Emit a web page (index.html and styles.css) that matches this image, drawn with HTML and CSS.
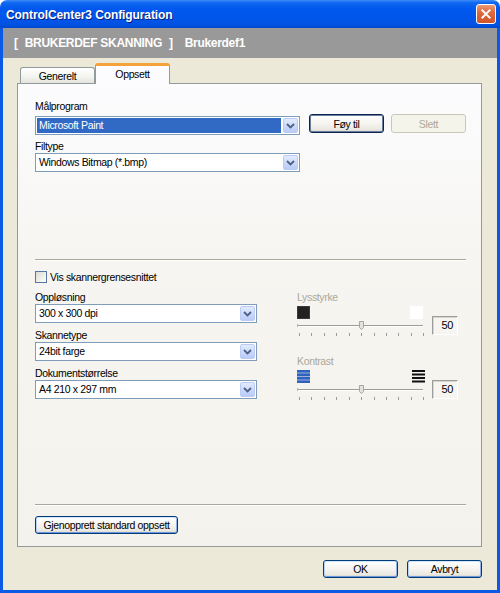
FILE: index.html
```html
<!DOCTYPE html>
<html>
<head>
<meta charset="utf-8">
<link rel="stylesheet" href="styles.css">
</head>
<body>
<div class="window">
  <div class="titlebar">
    <span class="title">ControlCenter3 Configuration</span>
    <span class="close"><svg width="20" height="20" viewBox="0 0 20 20"><path d="M6 6 L14 14 M14 6 L6 14" stroke="#fff" stroke-width="2.2" stroke-linecap="square"/></svg></span>
  </div>
  <div class="frame">
    <div class="header">
      <span class="br">[</span><span class="hd-main">BRUKERDEF SKANNING</span><span class="br br2">]</span><span class="hd-name">Brukerdef1</span>
    </div>
    <div class="tabs">
      <div class="tab">Generelt</div>
      <div class="tab active">Oppsett</div>
    </div>
    <div class="panel">
      <div class="label">Målprogram</div>
      <div class="row-app">
        <div class="select wide focus"><span class="val">Microsoft Paint</span><span class="dd"><svg width="13" height="13" viewBox="0 0 13 13"><path d="M3 5 L6.5 8.5 L10 5" fill="none" stroke="#4D6185" stroke-width="1.8"/></svg></span></div>
        <button class="btn def">Føy til</button>
        <button class="btn disabled">Slett</button>
      </div>
      <div class="label mt5">Filtype</div>
      <div class="select wide"><span class="val">Windows Bitmap (*.bmp)</span><span class="dd"><svg width="13" height="13" viewBox="0 0 13 13"><path d="M3 5 L6.5 8.5 L10 5" fill="none" stroke="#4D6185" stroke-width="1.8"/></svg></span></div>

      <div class="sep sep1"></div>

      <div class="check-row"><span class="checkbox"></span><span>Vis skannergrensesnittet</span></div>

      <div class="cols">
        <div class="col-left">
          <div class="label">Oppløsning</div>
          <div class="select narrow"><span class="val">300 x 300 dpi</span><span class="dd"><svg width="13" height="13" viewBox="0 0 13 13"><path d="M3 5 L6.5 8.5 L10 5" fill="none" stroke="#4D6185" stroke-width="1.8"/></svg></span></div>
          <div class="label">Skannetype</div>
          <div class="select narrow"><span class="val">24bit farge</span><span class="dd"><svg width="13" height="13" viewBox="0 0 13 13"><path d="M3 5 L6.5 8.5 L10 5" fill="none" stroke="#4D6185" stroke-width="1.8"/></svg></span></div>
          <div class="label">Dokumentstørrelse</div>
          <div class="select narrow"><span class="val">A4 210 x 297 mm</span><span class="dd"><svg width="13" height="13" viewBox="0 0 13 13"><path d="M3 5 L6.5 8.5 L10 5" fill="none" stroke="#4D6185" stroke-width="1.8"/></svg></span></div>
        </div>
        <div class="col-right">
          <div class="group">
            <div class="label dis">Lysstyrke</div>
            <div class="slider-row">
              <div class="slider-block">
                <div class="icons">
                  <span class="sq-black"></span>
                  <span class="sq-white"></span>
                </div>
                <svg class="slider" width="128" height="19" viewBox="0 0 128 19">
                  <rect x="0" y="6" width="126" height="1" fill="#9D9C99"/>
                  <rect x="0" y="7" width="126" height="1" fill="#FFFFFF"/>
                  <rect x="0" y="5" width="1" height="3" fill="#B8B6AE"/>
                  <path d="M62.5 2.5 H66.5 V8.5 L64.5 10.5 L62.5 8.5 Z" fill="#E4E2DA" stroke="#A8A69E" stroke-width="1"/>
                  <g fill="#9A9A9A">
                    <rect x="2" y="14" width="1" height="3"/><rect x="14" y="14" width="1" height="3"/><rect x="27" y="14" width="1" height="3"/><rect x="39" y="14" width="1" height="3"/><rect x="52" y="14" width="1" height="3"/><rect x="64" y="14" width="1" height="3"/><rect x="77" y="14" width="1" height="3"/><rect x="89" y="14" width="1" height="3"/><rect x="101" y="14" width="1" height="3"/><rect x="114" y="14" width="1" height="3"/><rect x="126" y="14" width="1" height="3"/>
                  </g>
                </svg>
              </div>
              <div class="numbox">50</div>
            </div>
          </div>
          <div class="group">
            <div class="label dis">Kontrast</div>
            <div class="slider-row">
              <div class="slider-block">
                <div class="icons">
                  <svg width="13" height="13" viewBox="0 0 13 13">
                    <rect x="0" y="0" width="13" height="13" fill="#9DB0D6"/>
                    <rect x="0" y="0" width="13" height="2.5" fill="#2F62BE"/>
                    <rect x="0" y="3.5" width="13" height="2.5" fill="#2F62BE"/>
                    <rect x="0" y="7" width="13" height="2.5" fill="#2F62BE"/>
                    <rect x="0" y="10.5" width="13" height="2.5" fill="#2F62BE"/>
                  </svg>
                  <svg width="13" height="13" viewBox="0 0 13 13">
                    <rect x="0" y="0" width="13" height="13" fill="#F2F1EC"/>
                    <rect x="0" y="0" width="13" height="2" fill="#111"/>
                    <rect x="0" y="3.5" width="13" height="2" fill="#111"/>
                    <rect x="0" y="7" width="13" height="2" fill="#111"/>
                    <rect x="0" y="10.5" width="13" height="2" fill="#111"/>
                  </svg>
                </div>
                <svg class="slider" width="128" height="19" viewBox="0 0 128 19">
                  <rect x="0" y="6" width="126" height="1" fill="#9D9C99"/>
                  <rect x="0" y="7" width="126" height="1" fill="#FFFFFF"/>
                  <rect x="0" y="5" width="1" height="3" fill="#B8B6AE"/>
                  <path d="M62.5 2.5 H66.5 V8.5 L64.5 10.5 L62.5 8.5 Z" fill="#E4E2DA" stroke="#A8A69E" stroke-width="1"/>
                  <g fill="#9A9A9A">
                    <rect x="2" y="14" width="1" height="3"/><rect x="14" y="14" width="1" height="3"/><rect x="27" y="14" width="1" height="3"/><rect x="39" y="14" width="1" height="3"/><rect x="52" y="14" width="1" height="3"/><rect x="64" y="14" width="1" height="3"/><rect x="77" y="14" width="1" height="3"/><rect x="89" y="14" width="1" height="3"/><rect x="101" y="14" width="1" height="3"/><rect x="114" y="14" width="1" height="3"/><rect x="126" y="14" width="1" height="3"/>
                  </g>
                </svg>
              </div>
              <div class="numbox">50</div>
            </div>
          </div>
        </div>
      </div>

      <div class="sep sep2"></div>
      <div class="restore-row"><button class="btn focus restore">Gjenopprett standard oppsett</button></div>
    </div>
    <div class="footer">
      <button class="btn focus">OK</button>
      <button class="btn focus">Avbryt</button>
    </div>
  </div>
</div>
</body>
</html>
```

FILE: styles.css
```css
html, body {
  margin: 0;
  padding: 0;
  background: #ffffff;
}

.window {
  width: 500px;
  height: 593px;
  display: flex;
  flex-direction: column;
  font-family: "Liberation Sans", Arial, sans-serif;
  font-size: 10.5px;
  letter-spacing: -0.35px;
  color: #000;
}

.titlebar {
  flex: none;
  height: 28px;
  box-sizing: border-box;
  border-radius: 7px 7px 0 0;
  background: linear-gradient(to bottom, #3B8CF8 0%, #1068F0 10%, #0058EE 30%, #0055E9 70%, #0252E0 90%, #0046C8 100%);
  display: flex;
  align-items: center;
  justify-content: space-between;
  padding: 1px 4px 0 6px;
}

.title {
  font-weight: bold;
  font-size: 12px;
  letter-spacing: -0.1px;
  color: #fff;
  text-shadow: 1px 1px 0 #0A1E7A;
}

.close {
  width: 20px;
  height: 20px;
  box-sizing: border-box;
  border: 1px solid #fff;
  border-radius: 3px;
  background: linear-gradient(to bottom, #EE9A74 0%, #E0683D 40%, #D0542A 100%);
  display: flex;
  align-items: center;
  justify-content: center;
  margin-top: -1px;
}

.close svg {
  width: 18px;
  height: 18px;
}

.frame {
  flex: 1;
  display: flex;
  flex-direction: column;
  background: #ECE9D8;
  border: 3px solid #0A5AE6;
  border-top: none;
}

.header {
  flex: none;
  height: 30px;
  background: #999999;
  color: #fff;
  font-weight: bold;
  font-size: 12px;
  letter-spacing: -0.3px;
  display: flex;
  align-items: center;
  padding-left: 11px;
}

.hd-main {
  margin-left: 7px;
}

.br2 {
  margin-left: 7px;
}

.hd-name {
  margin-left: 12px;
}

.tabs {
  flex: none;
  height: 19px;
  margin-top: 6px;
  padding-left: 17px;
  display: flex;
  align-items: flex-end;
  position: relative;
  z-index: 2;
}

.tab {
  width: 75px;
  height: 16px;
  box-sizing: border-box;
  border: 1px solid #919B9C;
  border-bottom: none;
  border-radius: 3px 3px 0 0;
  background: linear-gradient(to bottom, #FFFFFF, #F3F3EF 60%, #E4E3DC);
  display: flex;
  align-items: center;
  justify-content: center;
  padding-top: 1px;
}

.tab.active {
  width: 75px;
  height: 21px;
  margin-bottom: -1px;
  background: #FCFCFE;
  border-top: 3px solid #F3A33A;
  padding-top: 0;
  padding-bottom: 3px;
}

.panel {
  flex: none;
  height: 464px;
  box-sizing: border-box;
  margin: 0 15px 0 14px;
  border: 1px solid #919B9C;
  background: linear-gradient(to bottom, #FCFCFE 0%, #F6F5F1 40%, #F3F2EC 100%);
  padding: 16px 15px 12px 17px;
  display: flex;
  flex-direction: column;
  position: relative;
  z-index: 1;
}

.label {
  height: 12px;
  line-height: 12px;
  margin-bottom: 1px;
  white-space: nowrap;
}

.label.dis {
  color: #ACA899;
}

.mt5 {
  margin-top: 5px;
}

.row-app {
  display: flex;
  align-items: flex-start;
  margin-top: 1px;
}

.row-app .select {
  margin-top: 2px;
}

.select {
  height: 19px;
  box-sizing: border-box;
  border: 1px solid #7F9DB9;
  background: #fff;
  display: flex;
  align-items: center;
  margin-bottom: 6px;
}

.select.wide {
  width: 265px;
}

.select.narrow {
  width: 222px;
}

.row-app .select.wide {
  margin-bottom: 0;
}

.select .val {
  flex: 1;
  height: 15px;
  line-height: 15px;
  padding-left: 2px;
  margin-left: 1px;
  margin-right: 2px;
  white-space: nowrap;
}

.select.focus .val {
  background: #316AC5;
  color: #fff;
}

.dd {
  flex: none;
  width: 15px;
  height: 15px;
  box-sizing: border-box;
  margin-right: 1px;
  border: 1px solid #BACCF5;
  border-radius: 2px;
  background: linear-gradient(to bottom, #E3EBFD 0%, #CCDAFB 50%, #B9CCF7 100%);
  display: flex;
  align-items: center;
  justify-content: center;
}

.btn {
  width: 75px;
  height: 19px;
  box-sizing: border-box;
  border: 1px solid #003C74;
  border-radius: 3px;
  background: linear-gradient(to bottom, #FFFFFF 0%, #F5F4F0 50%, #EAE8E0 85%, #D8D4C8 100%);
  font-family: "Liberation Sans", Arial, sans-serif;
  font-size: 10.5px;
  letter-spacing: -0.35px;
  color: #000;
  padding: 0;
  display: flex;
  align-items: center;
  justify-content: center;
}

.btn.def {
  margin-left: 9px;
  border-color: #0B244F;
  box-shadow: inset 0 0 0 1px #6D7F9E;
}

.btn.disabled {
  margin-left: 7px;
  border-color: #C9C7BA;
  background: #F5F4EA;
  color: #ACA899;
}

.btn.focus {
  box-shadow: inset 0 1px 0 #CEE7FF, inset 1px 0 0 #B8D2F7, inset -1px 0 0 #8FB0E8, inset 0 -1px 0 #6E95E0;
}

.sep {
  height: 2px;
  border-top: 1px solid #ACA899;
  border-bottom: 1px solid #FFFFFF;
  box-sizing: border-box;
}

.sep1 {
  margin-top: 81px;
}

.check-row {
  display: flex;
  align-items: center;
  height: 13px;
  margin-top: 9px;
}

.checkbox {
  width: 12px;
  height: 12px;
  box-sizing: border-box;
  border: 1px solid #5776A3;
  background: linear-gradient(135deg, #DCDCD4, #F4F4F0 70%, #FFFFFF);
  margin-right: 3px;
}

.cols {
  display: flex;
  margin-top: 8px;
}

.col-left {
  width: 222px;
}

.col-left .label {
  margin-bottom: 1px;
}

.col-right {
  margin-left: 40px;
}

.group {
  height: 64px;
}

.slider-row {
  display: flex;
  align-items: flex-start;
  margin-top: 3px;
}

.slider-block {
  width: 128px;
}

.icons {
  display: flex;
  justify-content: space-between;
  width: 128px;
  height: 13px;
}

.icons svg {
  display: block;
}

.sq-black {
  width: 13px;
  height: 13px;
  box-sizing: border-box;
  background: #222222;
  border: 1px solid #3A3A3A;
}

.sq-white {
  width: 13px;
  height: 13px;
  background: #FFFFFF;
  margin-right: 2px;
}

.slider {
  display: block;
}

.numbox {
  width: 26px;
  height: 19px;
  box-sizing: border-box;
  margin-left: 7px;
  margin-top: 10px;
  border: 1px solid;
  border-color: #9D9D9A #FFFFFF #FFFFFF #9D9D9A;
  box-shadow: inset 1px 1px 0 #D8D6CE;
  background: #F6F5F1;
  font-size: 11px;
  line-height: 17px;
  text-align: right;
  padding-right: 4px;
}

.sep2 {
  margin-top: auto;
}

.restore-row {
  margin-top: 10px;
  display: flex;
}

.btn.restore {
  width: 143px;
  height: 18px;
}

.footer {
  flex: none;
  display: flex;
  justify-content: flex-end;
  gap: 9px;
  margin-top: 13px;
  padding-right: 15px;
}

.footer .btn {
  height: 18px;
}
```
